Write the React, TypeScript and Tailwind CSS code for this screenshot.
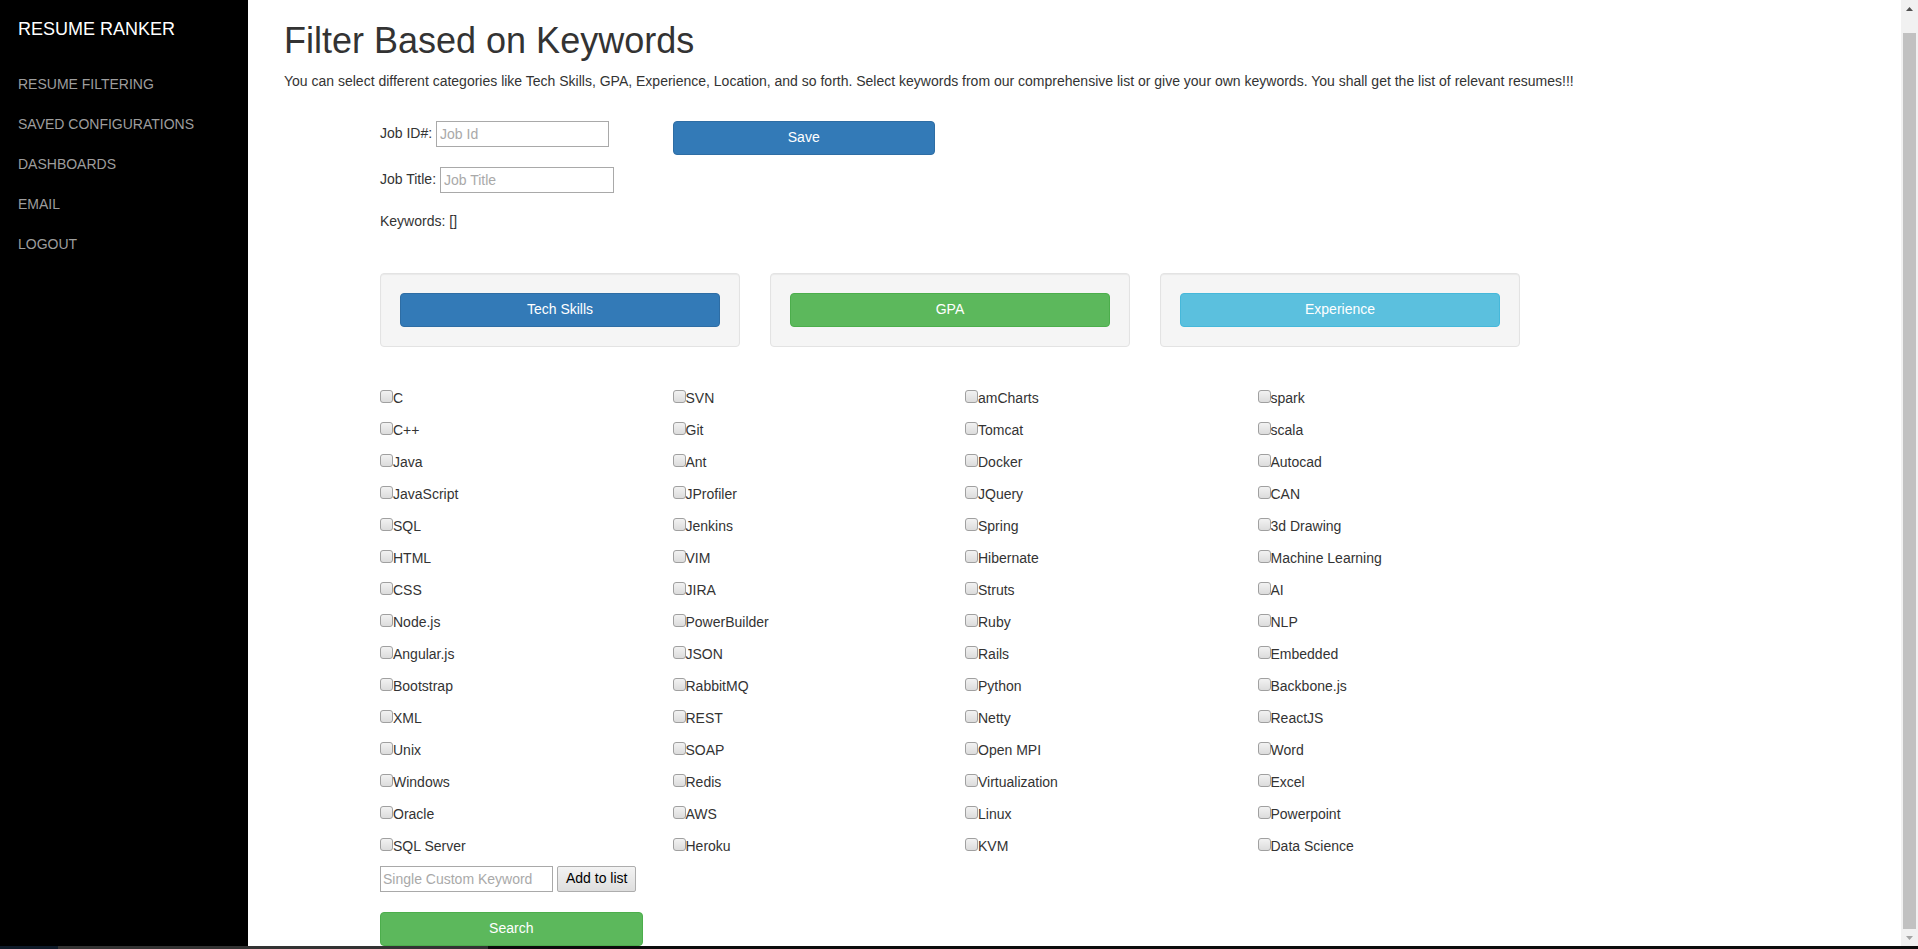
import React from "react";

// Keyword checkboxes, laid out column by column
const columns: string[][] = [
    ["C", "C++", "Java", "JavaScript", "SQL", "HTML", "CSS", "Node.js", "Angular.js", "Bootstrap", "XML", "Unix", "Windows", "Oracle", "SQL Server"],
    ["SVN", "Git", "Ant", "JProfiler", "Jenkins", "VIM", "JIRA", "PowerBuilder", "JSON", "RabbitMQ", "REST", "SOAP", "Redis", "AWS", "Heroku"],
    ["amCharts", "Tomcat", "Docker", "JQuery", "Spring", "Hibernate", "Struts", "Ruby", "Rails", "Python", "Netty", "Open MPI", "Virtualization", "Linux", "KVM"],
    ["spark", "scala", "Autocad", "CAN", "3d Drawing", "Machine Learning", "AI", "NLP", "Embedded", "Backbone.js", "ReactJS", "Word", "Excel", "Powerpoint", "Data Science"],
];

const navItems = ["RESUME FILTERING", "SAVED CONFIGURATIONS", "DASHBOARDS", "EMAIL", "LOGOUT"];

function Sidebar() {
    return (
        <aside className="w-[248px] shrink-0 bg-black pl-[18px]">
            <div className="h-[58px] flex items-center text-[18px] text-white">RESUME RANKER</div>
            <nav className="mt-[6px] flex flex-col">
                {navItems.map((item) => (
                    <a key={item} href="#" className="h-[40px] flex items-center text-[14px] text-[#9d9d9d]">
                        {item}
                    </a>
                ))}
            </nav>
        </aside>
    );
}

function KeywordBox({ label }: { label: string }) {
    return (
        <label className="h-[32px] flex items-center text-[14px] text-[#333]">
            <input
                type="checkbox"
                className="appearance-none m-0 w-[13px] h-[13px] rounded-[3px] border border-[#a0a0a0] bg-gradient-to-b from-[#f2f2f2] to-[#dcdcdc] -mt-[4px]"
            />
            <span>{label}</span>
        </label>
    );
}

function Scrollbar() {
    return (
        <div className="w-[17px] shrink-0 bg-[#f1f1f1] flex flex-col">
            <div className="h-[17px] flex items-center justify-center">
                <svg width="7" height="4" viewBox="0 0 7 4">
                    <polygon points="0,4 3.5,0 7,4" fill="#505050" />
                </svg>
            </div>
            <div className="flex-1 pt-[16px] px-[2px]">
                <div className="h-full bg-[#c1c1c1]"></div>
            </div>
            <div className="h-[17px] flex items-center justify-center">
                <svg width="7" height="4" viewBox="0 0 7 4">
                    <polygon points="0,0 3.5,4 7,0" fill="#a3a3a3" />
                </svg>
            </div>
        </div>
    );
}

export default function App() {
    return (
        <div className="w-[1918px] h-[949px] overflow-hidden flex flex-col font-['Liberation_Sans',Arial,sans-serif] text-[#333]">
            <div className="flex flex-1 min-h-0">
                <Sidebar />

                <main className="flex-1 bg-white overflow-hidden">
                    <h1 className="mt-[21px] mb-[10px] pl-[36px] text-[36px] leading-[39.6px] font-medium">Filter Based on Keywords</h1>
                    <p className="pl-[36px] text-[14px] leading-[20px]">
                        You can select different categories like Tech Skills, GPA, Experience, Location, and so forth. Select keywords from our comprehensive list or give your own keywords. You shall get the list of relevant resumes!!!
                    </p>

                    <div className="ml-[117px] w-[1170px]">
                        {/* job info + save */}
                        <div className="mt-[30px] flex text-[14px]">
                            <div className="w-[292.5px] px-[15px]">
                                <div className="h-[26px] flex items-center">
                                    <span>Job ID#:&nbsp;</span>
                                    <input
                                        placeholder="Job Id"
                                        className="w-[173px] h-[26px] border border-[#a9a9a9] px-[3px] placeholder:text-[#a9a9a9] outline-none"
                                    />
                                </div>
                                <div className="mt-[20px] h-[26px] flex items-center">
                                    <span>Job Title:&nbsp;</span>
                                    <input
                                        placeholder="Job Title"
                                        className="w-[174px] h-[26px] border border-[#a9a9a9] px-[3px] placeholder:text-[#a9a9a9] outline-none"
                                    />
                                </div>
                                <div className="mt-[19px] h-[20px] flex items-center">Keywords: []</div>
                            </div>
                            <div className="w-[292.5px] px-[15px]">
                                <button className="w-full h-[34px] rounded-[4px] bg-[#337ab7] border border-[#2e6da4] text-white">Save</button>
                            </div>
                        </div>

                        {/* category wells */}
                        <div className="mt-[41px] grid grid-cols-3">
                            {[
                                { name: "Tech Skills", cls: "bg-[#337ab7] border-[#2e6da4]" },
                                { name: "GPA", cls: "bg-[#5cb85c] border-[#4cae4c]" },
                                { name: "Experience", cls: "bg-[#5bc0de] border-[#46b8da]" },
                            ].map((c) => (
                                <div key={c.name} className="px-[15px]">
                                    <div className="p-[19px] bg-[#f5f5f5] border border-[#e3e3e3] rounded-[4px] shadow-[inset_0_1px_1px_rgba(0,0,0,0.05)]">
                                        <button className={`w-full h-[34px] rounded-[4px] border text-[14px] text-white ${c.cls}`}>{c.name}</button>
                                    </div>
                                </div>
                            ))}
                        </div>

                        {/* keyword checkboxes */}
                        <div className="mt-[36px] grid grid-cols-4">
                            {columns.map((col, i) => (
                                <div key={i} className="px-[15px]">
                                    {col.map((k) => (
                                        <KeywordBox key={k} label={k} />
                                    ))}
                                </div>
                            ))}
                        </div>

                        <div className="px-[15px]">
                            <div className="mt-[3px] flex gap-[4px] text-[14px]">
                                <input
                                    placeholder="Single Custom Keyword"
                                    className="w-[173px] h-[26px] border border-[#a9a9a9] px-[2px] placeholder:text-[#a9a9a9] outline-none"
                                />
                                <button className="h-[26px] px-[8px] rounded-[2px] border border-[#adadad] bg-gradient-to-b from-[#f3f3f3] to-[#dedede] text-black">
                                    Add to list
                                </button>
                            </div>
                            <button className="mt-[20px] w-[262.5px] h-[34px] rounded-[4px] bg-[#5cb85c] border border-[#4cae4c] text-[14px] text-white">
                                Search
                            </button>
                        </div>
                    </div>
                </main>

                <Scrollbar />
            </div>

            {/* taskbar edge */}
            <div className="h-[3px] flex shrink-0">
                <div className="w-[58px] bg-[#0e1a28]"></div>
                <div className="w-[430px] bg-[#333]"></div>
                <div className="flex-1 bg-[#0c0c0c]"></div>
            </div>
        </div>
    );
}
